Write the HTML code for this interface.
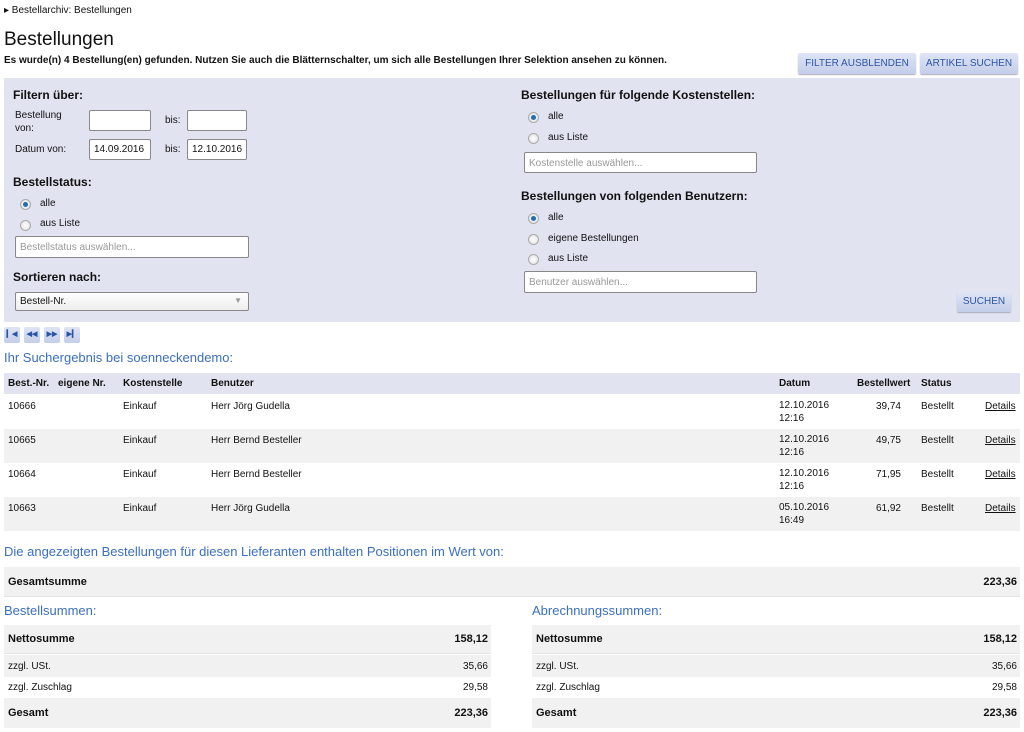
<!DOCTYPE html>
<html><head><meta charset="utf-8"><style>
*{box-sizing:border-box;margin:0;padding:0}
body{width:1024px;height:732px;background:#fff;font-family:"Liberation Sans",Arial,sans-serif;color:#111;position:relative;overflow:hidden;font-size:10px}
.a{position:absolute;white-space:nowrap}
.b{font-weight:bold}
.h{font-weight:bold;font-size:12px}
.in{position:absolute;background:#fff;border:1px solid #888;border-radius:2px;font-size:10px;padding:3px 4px;color:#111}
.ph{color:#999}
.btn{position:absolute;background:linear-gradient(#dfe5f5,#c4cdea);color:#2a55a5;font-size:10px;text-align:center;line-height:21px;border-radius:2px;box-shadow:0 1px 1px #aab}
.r{position:absolute;width:11px;height:11px;border-radius:50%;border:1px solid #aaa;background:radial-gradient(#fff,#ddd)}
.r.on::after{content:"";position:absolute;left:2px;top:2px;width:5px;height:5px;border-radius:50%;background:#1f6fb5}
.blue{color:#3a6fc0;font-size:13px}
.row{position:absolute;left:4px;width:1016px;height:34px}
.g{background:#f1f1f1}
.nv{position:absolute;top:327px;width:16px;height:16px;background:linear-gradient(#dfe5f5,#c4cdea);border-radius:2px;color:#2a55a5;font-size:7px;text-align:center;line-height:16px;font-weight:bold}
</style></head><body>
<div class="a" style="left:4px;top:5px">&#9656; Bestellarchiv: Bestellungen</div>
<div class="a" style="left:4px;top:29px;font-size:19px">Bestellungen</div>
<div class="a b" style="left:4px;top:55px">Es wurde(n) 4 Bestellung(en) gefunden. Nutzen Sie auch die Blätternschalter, um sich alle Bestellungen Ihrer Selektion ansehen zu können.</div>
<div class="btn" style="left:798px;top:53px;width:118px">FILTER AUSBLENDEN</div>
<div class="btn" style="left:920px;top:53px;width:98px">ARTIKEL SUCHEN</div>
<div class="a" style="left:4px;top:78px;width:1016px;height:244px;background:#e1e3f0"></div>
<div class="a h" style="left:13px;top:88px">Filtern über:</div>
<div class="a" style="left:15px;top:109px;line-height:13px">Bestellung<br>von:</div>
<div class="in" style="left:89px;top:110px;width:62px;height:21px"></div>
<div class="a" style="left:165px;top:115px">bis:</div>
<div class="in" style="left:187px;top:110px;width:60px;height:21px"></div>
<div class="a" style="left:15px;top:144px">Datum von:</div>
<div class="in" style="left:89px;top:139px;width:62px;height:21px;padding-top:4px">14.09.2016</div>
<div class="a" style="left:165px;top:144px">bis:</div>
<div class="in" style="left:187px;top:139px;width:60px;height:21px;padding-top:4px">12.10.2016</div>
<div class="a h" style="left:13px;top:175px">Bestellstatus:</div>
<div class="r on" style="left:20px;top:199px"></div><div class="a" style="left:40px;top:198px">alle</div>
<div class="r" style="left:20px;top:220px"></div><div class="a" style="left:40px;top:218px">aus Liste</div>
<div class="in ph" style="left:15px;top:236px;width:234px;height:22px;padding-top:5px">Bestellstatus auswählen...</div>
<div class="a h" style="left:13px;top:270px">Sortieren nach:</div>
<div class="in" style="left:15px;top:292px;width:234px;height:19px;background:linear-gradient(#fff,#eee)">Bestell-Nr.<span style="position:absolute;right:6px;color:#999;font-size:8px">&#9660;</span></div>
<div class="a h" style="left:521px;top:88px">Bestellungen für folgende Kostenstellen:</div>
<div class="r on" style="left:528px;top:112px"></div><div class="a" style="left:548px;top:111px">alle</div>
<div class="r" style="left:528px;top:133px"></div><div class="a" style="left:548px;top:132px">aus Liste</div>
<div class="in ph" style="left:524px;top:152px;width:233px;height:21px;padding-top:5px">Kostenstelle auswählen...</div>
<div class="a h" style="left:521px;top:189px">Bestellungen von folgenden Benutzern:</div>
<div class="r on" style="left:528px;top:213px"></div><div class="a" style="left:548px;top:212px">alle</div>
<div class="r" style="left:528px;top:234px"></div><div class="a" style="left:548px;top:233px">eigene Bestellungen</div>
<div class="r" style="left:528px;top:254px"></div><div class="a" style="left:548px;top:253px">aus Liste</div>
<div class="in ph" style="left:524px;top:271px;width:233px;height:22px;padding-top:5px">Benutzer auswählen...</div>
<div class="btn" style="left:957px;top:292px;width:54px;height:20px;line-height:20px">SUCHEN</div>
<div class="nv" style="left:4px">&#9614;&#9664;</div><div class="nv" style="left:24px">&#9664;&#9664;</div><div class="nv" style="left:44px">&#9654;&#9654;</div><div class="nv" style="left:64px">&#9654;&#9614;</div>
<div class="a blue" style="left:4px;top:350px">Ihr Suchergebnis bei soenneckendemo:</div>
<div class="row" style="top:373px;height:21px;background:#e1e3f0"></div>
<div class="a b" style="left:8px;top:378px">Best.-Nr.</div><div class="a b" style="left:58px;top:378px">eigene Nr.</div><div class="a b" style="left:123px;top:378px">Kostenstelle</div><div class="a b" style="left:211px;top:378px">Benutzer</div><div class="a b" style="left:779px;top:378px">Datum</div><div class="a b" style="left:857px;top:378px">Bestellwert</div><div class="a b" style="left:921px;top:378px">Status</div>
<div class="row" style="top:394px"></div><div class="row g" style="top:429px"></div><div class="row" style="top:463px"></div><div class="row g" style="top:497px"></div>
<div class="a" style="left:8px;top:401px">10666</div><div class="a" style="left:123px;top:401px">Einkauf</div><div class="a" style="left:211px;top:401px">Herr Jörg Gudella</div><div class="a" style="left:779px;top:399px;line-height:13px">12.10.2016<br>12:16</div><div class="a" style="left:840px;width:61px;text-align:right;top:401px">39,74</div><div class="a" style="left:921px;top:401px">Bestellt</div><div class="a" style="left:985px;top:401px;text-decoration:underline">Details</div>
<div class="a" style="left:8px;top:435px">10665</div><div class="a" style="left:123px;top:435px">Einkauf</div><div class="a" style="left:211px;top:435px">Herr Bernd Besteller</div><div class="a" style="left:779px;top:433px;line-height:13px">12.10.2016<br>12:16</div><div class="a" style="left:840px;width:61px;text-align:right;top:435px">49,75</div><div class="a" style="left:921px;top:435px">Bestellt</div><div class="a" style="left:985px;top:435px;text-decoration:underline">Details</div>
<div class="a" style="left:8px;top:469px">10664</div><div class="a" style="left:123px;top:469px">Einkauf</div><div class="a" style="left:211px;top:469px">Herr Bernd Besteller</div><div class="a" style="left:779px;top:467px;line-height:13px">12.10.2016<br>12:16</div><div class="a" style="left:840px;width:61px;text-align:right;top:469px">71,95</div><div class="a" style="left:921px;top:469px">Bestellt</div><div class="a" style="left:985px;top:469px;text-decoration:underline">Details</div>
<div class="a" style="left:8px;top:503px">10663</div><div class="a" style="left:123px;top:503px">Einkauf</div><div class="a" style="left:211px;top:503px">Herr Jörg Gudella</div><div class="a" style="left:779px;top:501px;line-height:13px">05.10.2016<br>16:49</div><div class="a" style="left:840px;width:61px;text-align:right;top:503px">61,92</div><div class="a" style="left:921px;top:503px">Bestellt</div><div class="a" style="left:985px;top:503px;text-decoration:underline">Details</div>
<div class="a blue" style="left:4px;top:544px">Die angezeigten Bestellungen für diesen Lieferanten enthalten Positionen im Wert von:</div>
<div class="row g" style="top:567px;height:30px;border-bottom:1px solid #e4e4e4"></div>
<div class="a b" style="left:8px;top:576px;font-size:11px">Gesamtsumme</div><div class="a b" style="left:900px;width:117px;text-align:right;top:576px;font-size:11px">223,36</div>
<div class="a blue" style="left:4px;top:603px">Bestellsummen:</div>
<div class="a blue" style="left:532px;top:603px">Abrechnungssummen:</div>
<div class="a g" style="left:4px;top:625px;width:487px;height:29px;border-bottom:1px solid #e4e4e4"></div>
<div class="a g" style="left:4px;top:655px;width:487px;height:22px"></div>
<div class="a g" style="left:4px;top:698px;width:487px;height:30px"></div>
<div class="a g" style="left:532px;top:625px;width:488px;height:29px;border-bottom:1px solid #e4e4e4"></div>
<div class="a g" style="left:532px;top:655px;width:488px;height:22px"></div>
<div class="a g" style="left:532px;top:698px;width:488px;height:30px"></div>
<div class="a b" style="left:8px;top:633px;font-size:11px">Nettosumme</div><div class="a b" style="left:380px;width:108px;text-align:right;top:633px;font-size:11px">158,12</div>
<div class="a" style="left:8px;top:661px">zzgl. USt.</div><div class="a" style="left:380px;width:108px;text-align:right;top:661px">35,66</div>
<div class="a" style="left:8px;top:682px">zzgl. Zuschlag</div><div class="a" style="left:380px;width:108px;text-align:right;top:682px">29,58</div>
<div class="a b" style="left:8px;top:707px;font-size:11px">Gesamt</div><div class="a b" style="left:380px;width:108px;text-align:right;top:707px;font-size:11px">223,36</div>
<div class="a b" style="left:536px;top:633px;font-size:11px">Nettosumme</div><div class="a b" style="left:900px;width:117px;text-align:right;top:633px;font-size:11px">158,12</div>
<div class="a" style="left:536px;top:661px">zzgl. USt.</div><div class="a" style="left:900px;width:117px;text-align:right;top:661px">35,66</div>
<div class="a" style="left:536px;top:682px">zzgl. Zuschlag</div><div class="a" style="left:900px;width:117px;text-align:right;top:682px">29,58</div>
<div class="a b" style="left:536px;top:707px;font-size:11px">Gesamt</div><div class="a b" style="left:900px;width:117px;text-align:right;top:707px;font-size:11px">223,36</div>
</body></html>
